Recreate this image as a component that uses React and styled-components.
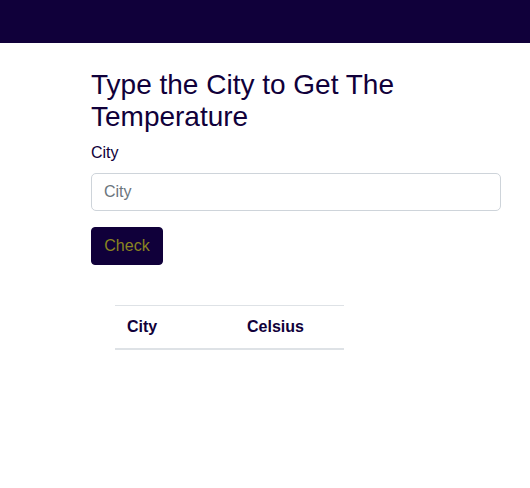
import React from 'react'
import styled, { createGlobalStyle } from 'styled-components'

const GlobalStyle = createGlobalStyle`
  body {
    margin: 0;
    font-family: "Liberation Sans", Arial, sans-serif;
    font-size: 16px;
    line-height: 1.5;
    color: #212529;
    background: #fff;
  }
  * { box-sizing: border-box; }
`

const Navbar = styled.nav`
  height: 43px;
  background: #10003a;
`

const Main = styled.main`
  width: 410px;
  margin-left: 91px;
  padding-top: 26px;
`

const Title = styled.h2`
  margin: 0 0 8px;
  font-size: 28px;
  font-weight: 400;
  line-height: 1.15;
  color: #10003a;
`

const Label = styled.label`
  display: block;
  margin-bottom: 8px;
  color: #10003a;
`

const Input = styled.input`
  display: block;
  width: 100%;
  height: 38px;
  padding: 6px 12px;
  font: inherit;
  color: #212529;
  border: 1px solid #ced4da;
  border-radius: 5px;
  &::placeholder { color: #6c757d; }
`

const Button = styled.button`
  margin-top: 16px;
  width: 72px;
  height: 38px;
  font: inherit;
  font-weight: 300;
  color: #8a8520;
  background: #10003a;
  border: 1px solid #10003a;
  border-radius: 4px;
`

const Table = styled.table`
  margin: 40px 0 0 24px;
  width: 229px;
  border-collapse: collapse;
  border-top: 1px solid #dee2e6;
`

const Th = styled.th`
  text-align: left;
  padding: 9px 12px 9px;
  font-weight: 700;
  color: #10003a;
  border-bottom: 2px solid #dee2e6;
  width: ${p => p.w}px;
`

export default function App() {
  return (
    <>
      <GlobalStyle />
      <Navbar />
      <Main>
        <Title>Type the City to Get The Temperature</Title>
        <Label htmlFor="city">City</Label>
        <Input id="city" placeholder="City" />
        <Button>Check</Button>
        <Table>
          <thead>
            <tr>
              <Th w={120}>City</Th>
              <Th>Celsius</Th>
            </tr>
          </thead>
        </Table>
      </Main>
    </>
  )
}
